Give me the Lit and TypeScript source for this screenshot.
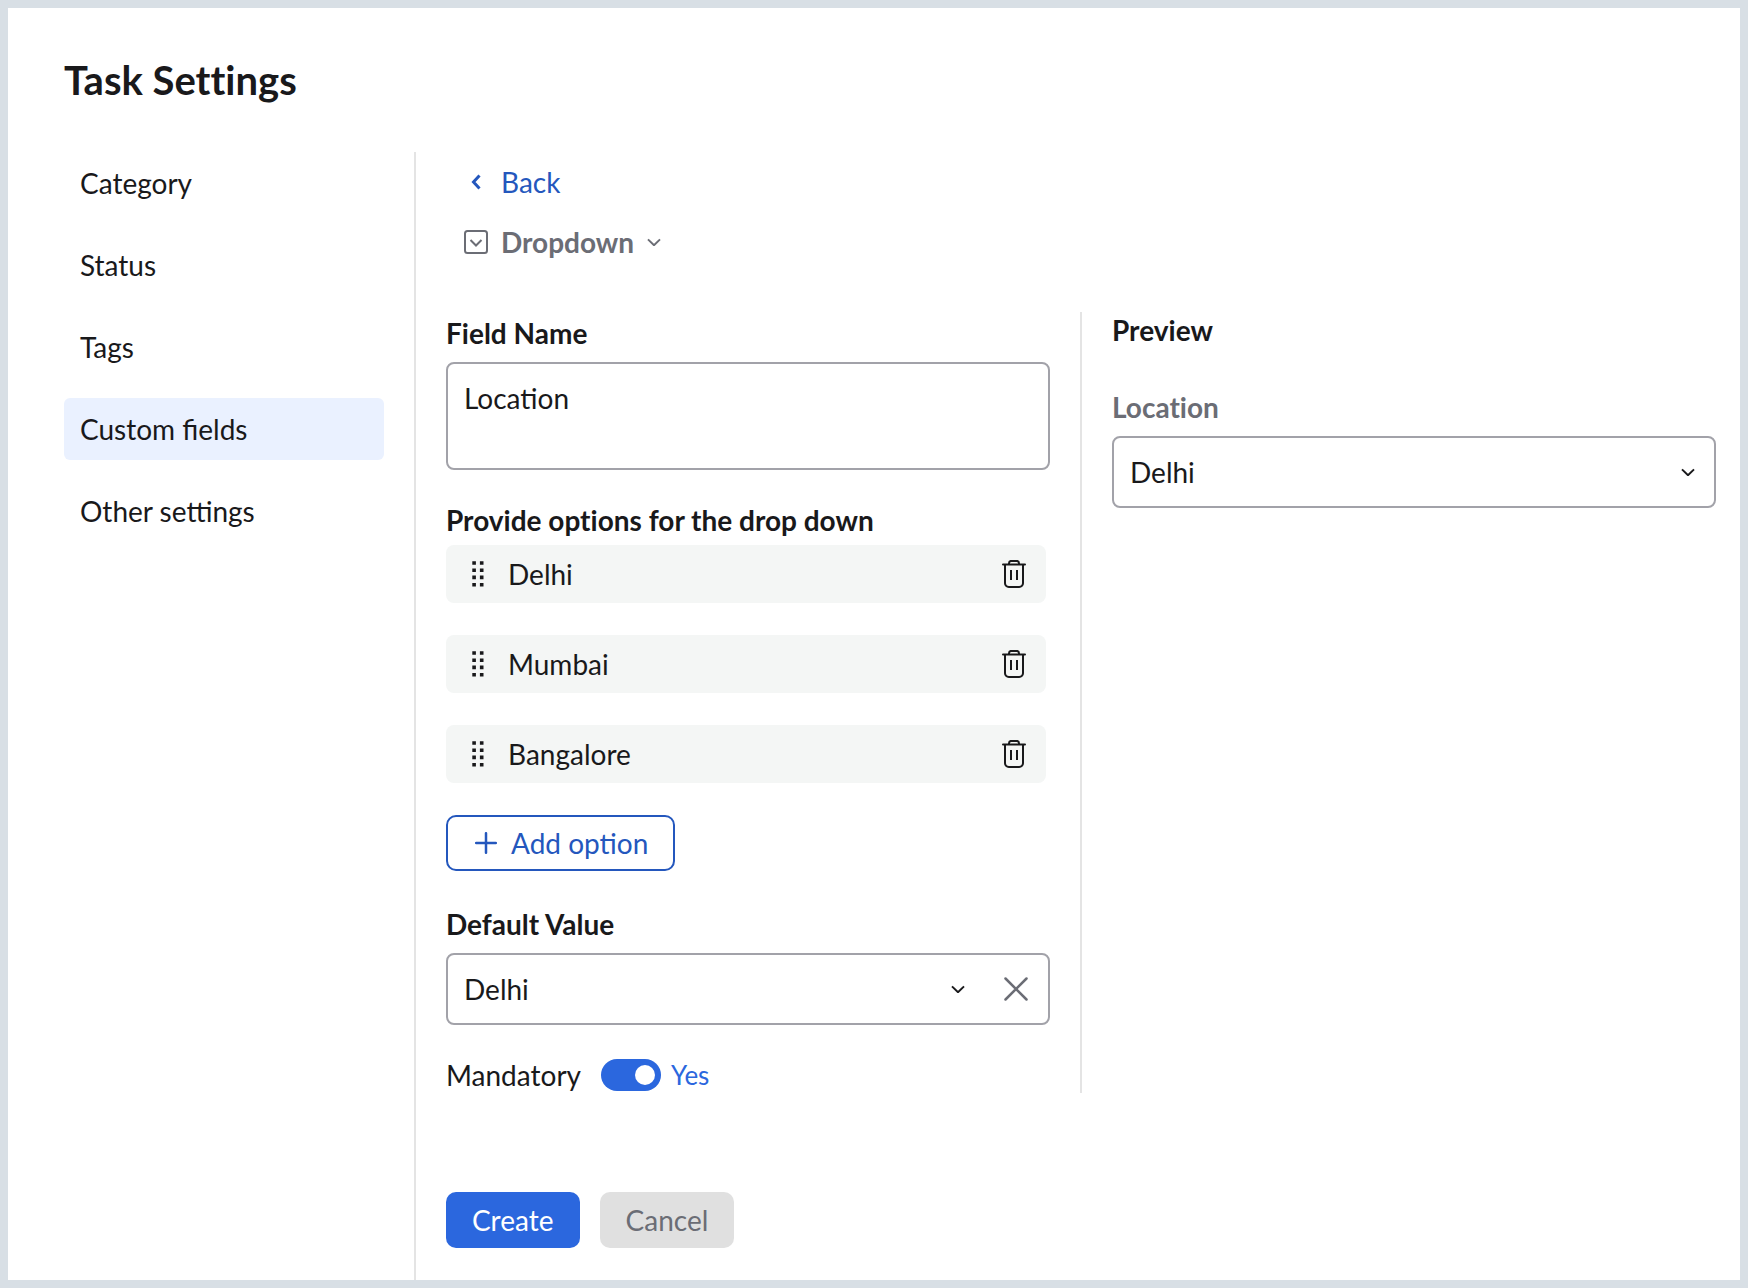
import { LitElement, html, css } from "lit";
import { customElement, state } from "lit/decorators.js";

const SECTIONS = ["Category", "Status", "Tags", "Custom fields", "Other settings"];

const chevron = html`
  <svg class="chevron" viewBox="0 0 14 8" width="14" height="8" aria-hidden="true">
    <path d="M1 1.400 7 7.200l6-5.800" />
  </svg>
`;

@customElement("app-root")
export class AppRoot extends LitElement {
  @state() private section = "Custom fields";
  @state() private fieldName = "Location";
  @state() private options = ["Delhi", "Mumbai", "Bangalore"];
  @state() private defaultValue = "Delhi";
  @state() private mandatory = true;

  static styles = css`
    :host {
      --ink: #19191b;
      --muted: #6b6d75;
      --line: #e4e4e4;
      --field-line: #a2a2a9;
      --link: #2457bd;
      --accent: #2b67de;
      display: flex;
      flex-direction: column;
      box-sizing: border-box;
      min-height: 100vh;
      border: 8px solid #d8dfe5;
      background: #fff;
      color: var(--ink);
      font: 28px/36px Lato, "Liberation Sans", sans-serif;
    }
    *, *::before { box-sizing: border-box; }
    svg { fill: none; stroke: currentColor; flex: none; }
    button, select, textarea {
      font: inherit;
      color: inherit;
      margin: 0;
    }
    button {
      border: 0;
      padding: 0;
      background: none;
      cursor: pointer;
    }
    h1, h2 { margin: 0; }
    h1, h2, .label { font-variant-ligatures: none; }
    h1 {
      padding: 48px 56px;
      font-size: 40px;
      line-height: 48px;
    }
    .body { display: flex; flex: 1; }
    .nav {
      display: flex;
      flex-direction: column;
      gap: 20px;
      flex: none;
      width: 320px;
      margin: 0 30px 0 56px;
    }
    .nav a {
      padding: 13px 16px;
      border-radius: 6px;
      color: inherit;
      text-decoration: none;
    }
    .nav a.active { background: #eaf1ff; }
    .main {
      flex: 1;
      min-width: 0;
      border-left: 2px solid var(--line);
      padding: 12px 24px 32px 30px;
    }
    .heading {
      display: flex;
      flex-direction: column;
      align-items: flex-start;
      gap: 24px;
      padding-left: 18px;
      margin-bottom: 52px;
    }
    .heading > * {
      display: flex;
      align-items: center;
      gap: 13px;
    }
    .back { color: var(--link); text-decoration: none; }
    .back svg { stroke-width: 3; }
    .type { color: var(--muted); font-weight: 700; }
    .type svg { stroke-width: 2; }
    .columns {
      display: grid;
      grid-template-columns: minmax(0, 634fr) minmax(0, 636fr);
    }
    .edit { padding: 3px 30px 0 0; }
    .preview {
      border-left: 2px solid var(--line);
      padding-left: 30px;
    }
    .label, h2 {
      display: block;
      font-size: 28px;
      line-height: 36px;
      font-weight: 700;
    }
    .label { margin-bottom: 11px; }
    h2 { margin-bottom: 41px; }
    .preview .label { color: var(--muted); }
    textarea, select {
      display: block;
      width: 100%;
      border: 2px solid var(--field-line);
      border-radius: 8px;
      background: #fff;
      padding: 16px;
      appearance: none;
      outline-color: var(--accent);
    }
    textarea { resize: none; }
    .field { margin-bottom: 32px; }
    .picker { display: grid; align-items: center; }
    .picker > * { grid-area: 1 / 1; }
    .picker .tools {
      justify-self: end;
      display: flex;
      align-items: center;
      gap: 38px;
      padding-right: 21px;
      pointer-events: none;
    }
    .tools .chevron { stroke-width: 2; }
    .tools button { display: flex; color: var(--muted); pointer-events: auto; }
    .options {
      display: flex;
      flex-direction: column;
      gap: 32px;
      list-style: none;
      margin: 0 4px 32px 0;
      padding: 0;
    }
    .options li {
      display: flex;
      align-items: center;
      gap: 24px;
      padding: 11px 20px 11px 26px;
      border-radius: 8px;
      background: #f4f6f5;
    }
    .options span { flex: 1; }
    .options button { display: flex; }
    .options .grip { fill: currentColor; stroke: none; }
    .tight { margin-bottom: 7px; }
    .add {
      display: flex;
      align-items: center;
      gap: 14px;
      border: 2px solid var(--link);
      border-radius: 10px;
      padding: 8px 25px 8px 27px;
      margin-bottom: 35px;
      color: var(--link);
    }
    .switch { display: flex; align-items: center; }
    .switch input {
      appearance: none;
      display: flex;
      align-items: center;
      width: 60px;
      height: 32px;
      margin: 0 10px 0 20px;
      padding: 6px;
      border-radius: 16px;
      background: #a2a2a9;
    }
    .switch input::before {
      content: "";
      width: 20px;
      height: 20px;
      border-radius: 50%;
      background: #fff;
    }
    .switch input:checked { justify-content: flex-end; background: var(--accent); }
    .switch output { color: var(--accent); font-size: 26px; }
    .actions { display: flex; gap: 20px; margin-top: 99px; }
    .actions button {
      padding: 10px 26px;
      border-radius: 10px;
      background: #e0e0e0;
      color: var(--muted);
    }
    .actions .primary { background: var(--accent); color: #fff; }
  `;

  private addOption() {
    this.options = [...this.options, `Option ${this.options.length + 1}`];
  }

  private removeOption(index: number) {
    this.options = this.options.filter((_, i) => i !== index);
  }

  private renderChoices() {
    return this.options.map(
      (o) => html`<option ?selected=${o === this.defaultValue}>${o}</option>`
    );
  }

  private renderOption(name: string, index: number) {
    return html`
      <li>
        <svg class="grip" viewBox="0 0 12 26" width="12" height="26" aria-hidden="true">
          <path d="M.3.200h3.600v3.600H.3zM7.900.200h3.600v3.600H7.900zM.3 7.400h3.600V11H.3zM7.900 7.400h3.600V11H7.900zM.3 14.600h3.600v3.600H.3zM7.900 14.600h3.600v3.600H7.900zM.3 21.900h3.600v3.600H.3zM7.900 21.900h3.600v3.600H7.900z" />
        </svg>
        <span>${name}</span>
        <button type="button" aria-label="Delete ${name}" @click=${() => this.removeOption(index)}>
          <svg viewBox="0 0 24 28" width="24" height="28" stroke-width="2" stroke-linecap="round" aria-hidden="true">
            <path d="M1 4.600h22M7 4.500V3.200A2.400 2.400 0 0 1 9.400.900h5.200A2.400 2.400 0 0 1 17 3.200v1.300M3 5v18.200A3.800 3.800 0 0 0 6.800 27h10.400A3.800 3.800 0 0 0 21 23.200V5" />
            <path d="M9 10v10M15 10v10" stroke-linecap="butt" />
          </svg>
        </button>
      </li>
    `;
  }

  render() {
    return html`
      <h1>Task Settings</h1>
      <div class="body">
        <nav class="nav">
          ${SECTIONS.map(
            (s) => html`<a
              href="#"
              class=${s === this.section ? "active" : ""}
              @click=${(e: Event) => {
                e.preventDefault();
                this.section = s;
              }}
              >${s}</a
            >`
          )}
        </nav>
        <main class="main">
          <div class="heading">
            <a class="back" href="#">
              <svg viewBox="0 0 24 24" width="24" height="24" aria-hidden="true">
                <path d="M15.500 5.500 9.500 12l6 6.500" />
              </svg>
              Back
            </a>
            <button type="button" class="type">
              <svg viewBox="0 0 24 24" width="24" height="24" aria-hidden="true">
                <rect x="1" y="1" width="22" height="22" rx="2.500" />
                <path d="M6.500 10 12 15.500l5.500-5.500" />
              </svg>
              Dropdown ${chevron}
            </button>
          </div>
          <form @submit=${(e: Event) => e.preventDefault()}>
            <div class="columns">
              <div class="edit">
                <label class="label" for="name">Field Name</label>
                <textarea
                  id="name"
                  class="field"
                  rows="2"
                  .value=${this.fieldName}
                  @input=${(e: Event) => (this.fieldName = (e.target as HTMLTextAreaElement).value)}
                ></textarea>
                <div class="label tight" id="options-label">Provide options for the drop down</div>
                <ul class="options" aria-labelledby="options-label">
                  ${this.options.map((o, i) => this.renderOption(o, i))}
                </ul>
                <button type="button" class="add" @click=${this.addOption}>
                  <svg viewBox="0 0 22 22" width="22" height="22" stroke-width="2.500" stroke-linecap="round" aria-hidden="true">
                    <path d="M11 1.200v19.600M1.200 11h19.600" />
                  </svg>
                  Add option
                </button>
                <label class="label" for="default">Default Value</label>
                <div class="picker field">
                  <select
                    id="default"
                    @change=${(e: Event) => (this.defaultValue = (e.target as HTMLSelectElement).value)}
                  >
                    ${this.renderChoices()}
                  </select>
                  <div class="tools">
                    ${chevron}
                    <button type="button" aria-label="Clear default value">
                      <svg viewBox="0 0 26 26" width="26" height="26" stroke-width="2.500" stroke-linecap="round" aria-hidden="true">
                        <path d="M2.500 2.500l21 21M23.500 2.500l-21 21" />
                      </svg>
                    </button>
                  </div>
                </div>
                <div class="switch">
                  <label for="mandatory">Mandatory</label>
                  <input
                    id="mandatory"
                    type="checkbox"
                    role="switch"
                    .checked=${this.mandatory}
                    @change=${(e: Event) => (this.mandatory = (e.target as HTMLInputElement).checked)}
                  />
                  <output for="mandatory">${this.mandatory ? "Yes" : "No"}</output>
                </div>
              </div>
              <section class="preview">
                <h2>Preview</h2>
                <label class="label" for="preview">${this.fieldName}</label>
                <div class="picker">
                  <select id="preview">
                    ${this.renderChoices()}
                  </select>
                  <div class="tools">${chevron}</div>
                </div>
              </section>
            </div>
            <div class="actions">
              <button type="submit" class="primary">Create</button>
              <button type="button">Cancel</button>
            </div>
          </form>
        </main>
      </div>
    `;
  }
}
